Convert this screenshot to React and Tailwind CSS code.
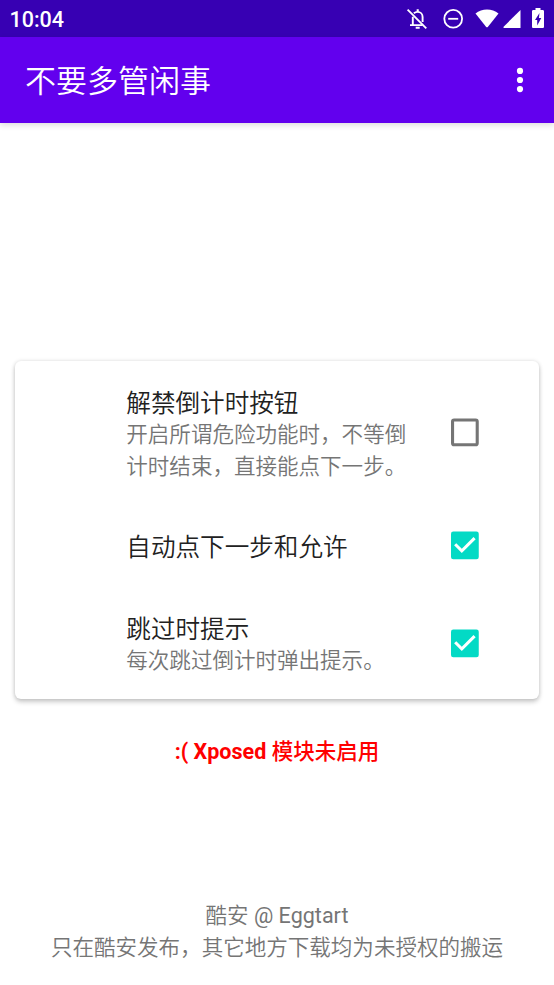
import React, { useState } from 'react'

const rows = [
  {
    id: 'countdown',
    title: '解禁倒计时按钮',
    desc: ['开启所谓危险功能时，不等倒', '计时结束，直接能点下一步。'],
    height: 'h-[143px]',
    pad: 'pt-[5px]',
  },
  { id: 'auto', title: '自动点下一步和允许', desc: [], height: 'h-[83px]', pad: 'pt-[3px]' },
  { id: 'toast', title: '跳过时提示', desc: ['每次跳过倒计时弹出提示。'], height: 'h-[112px]', pad: 'pt-[5px]' },
]

const StatusBar = () => {
  return (
    <div className="flex h-[37px] items-center bg-[#3700b3] pl-[9.5px] text-white">
      <span className="pt-[2px] text-[21.5px] font-medium leading-[30px]">10:04</span>
      <svg className="ml-auto h-[24px] w-[24px]" viewBox="0 0 24 24" fill="none" stroke="currentColor" strokeWidth="1.900">
        <path d="M2.600 2.700l18.700 18.600" />
        <path d="M8.900 6.300c1-.9 2.300-1.400 3.700-1.400 2.900 0 5 2.200 5 5.100v5" />
        <path d="M7.800 9.800v8.300M5 18.100h12.600" />
        <path d="M12.700 2.300v2.500M10.700 20.800h4" strokeWidth="2.100" />
      </svg>
      <svg className="ml-[12px] h-[24px] w-[24px]" viewBox="0 0 24 24" fill="none" stroke="currentColor" strokeWidth="1.800">
        <circle cx="12.200" cy="11.800" r="8.900" />
        <path d="M7.200 11.800h10" />
      </svg>
      <svg className="ml-[10px] h-[19px] w-[24px]" viewBox="0 0 24 19" fill="currentColor">
        <path d="M.5 4.500C3.800 1.900 7.700.5 12 .5s8.200 1.400 11.500 4L12.800 17.900c-.4.500-1.200.5-1.600 0z" />
      </svg>
      <svg className="ml-[4px] mt-[1px] h-[18px] w-[18px]" viewBox="0 0 18 18" fill="currentColor">
        <path d="M17.500 0v18H1.200C.4 18 .1 17.200.6 16.700z" />
      </svg>
      <svg className="ml-[11px] mr-[10px] mb-[1px] h-[20px] w-[12px]" viewBox="0 0 12 20" fill="currentColor">
        <path fillRule="evenodd" d="M3.500 0h5v2h2.200c.7 0 1.300.6 1.300 1.300v15.400c0 .7-.6 1.300-1.300 1.300H1.300C.6 20 0 19.400 0 18.700V3.300C0 2.600.6 2 1.300 2h2.200zM7.500 5L3 12h2.200v5.500L9.300 10H6.900z" />
      </svg>
    </div>
  )
}

const Checkbox = ({ checked, onClick }) => {
  return (
    <button onClick={onClick} className="ml-auto mr-[56px] h-[37px] w-[37px] shrink-0">
      <svg className="h-[37px] w-[37px]" viewBox="-0.25 0.1 24 24">
        {checked ? (
          <>
            <rect x="3" y="3" width="18" height="18" rx="1.500" fill="#03dac5" />
            <path d="M10 17l-5-5 1.410-1.410L10 14.170l7.590-7.590L19 8z" fill="#fff" />
          </>
        ) : (
          <rect x="4" y="4" width="16" height="16" rx="1" fill="none" stroke="#757575" strokeWidth="2" />
        )}
      </svg>
    </button>
  )
}

const App = () => {
  const [values, setValues] = useState({ countdown: false, auto: true, toast: true })
  const toggle = (id) => setValues({ ...values, [id]: !values[id] })

  return (
    <div className="flex h-[985px] w-[554px] flex-col overflow-hidden bg-white font-['Roboto','Noto_Sans_CJK_SC',sans-serif]">
      <StatusBar />
      <header className="flex h-[86px] shrink-0 items-center bg-[#6200ee] pl-[25px] text-white shadow-[0_2px_6px_rgba(0,0,0,0.14)]">
        <h1 className="pt-[2px] text-[31px] font-[350] leading-[45px]">不要多管闲事</h1>
        <svg className="ml-auto mr-[30px] h-[26px] w-[8px]" viewBox="0 0 8 26" fill="currentColor">
          <circle cx="4" cy="3.900" r="3.100" />
          <circle cx="4" cy="13" r="3.100" />
          <circle cx="4" cy="22.100" r="3.100" />
        </svg>
      </header>

      <div className="mx-[15px] mt-[238px] h-[338px] shrink-0 rounded-[6px] bg-white shadow-[0_3px_5px_rgba(0,0,0,0.2),0_0_4px_rgba(0,0,0,0.12)]">
        {rows.map((row) => (
          <div key={row.id} className={`flex items-center pl-[111.3px] ${row.height}`}>
            <div className={`whitespace-nowrap ${row.pad}`}>
              <p className="text-[24.6px] font-[350] leading-[31px] text-[#212121]">{row.title}</p>
              {row.desc.map((line) => (
                <p key={line} className="text-[21.54px] font-[350] leading-[31.5px] text-[#757575]">{line}</p>
              ))}
            </div>
            <Checkbox checked={values[row.id]} onClick={() => toggle(row.id)} />
          </div>
        ))}
      </div>

      <p className="mt-[37px] text-center text-[21.54px] font-bold leading-[32px] text-[#ff0000]">
        :( Xposed <span className="font-medium">模块未启用</span>
      </p>

      <footer className="mb-[22px] mt-auto text-center text-[21.54px] leading-[31.5px] text-[#757575]">
        <p><span className="font-[350]">酷安</span> @ Eggtart</p>
        <p className="font-[350]">只在酷安发布，其它地方下载均为未授权的搬运</p>
      </footer>
    </div>
  )
}

export default App
